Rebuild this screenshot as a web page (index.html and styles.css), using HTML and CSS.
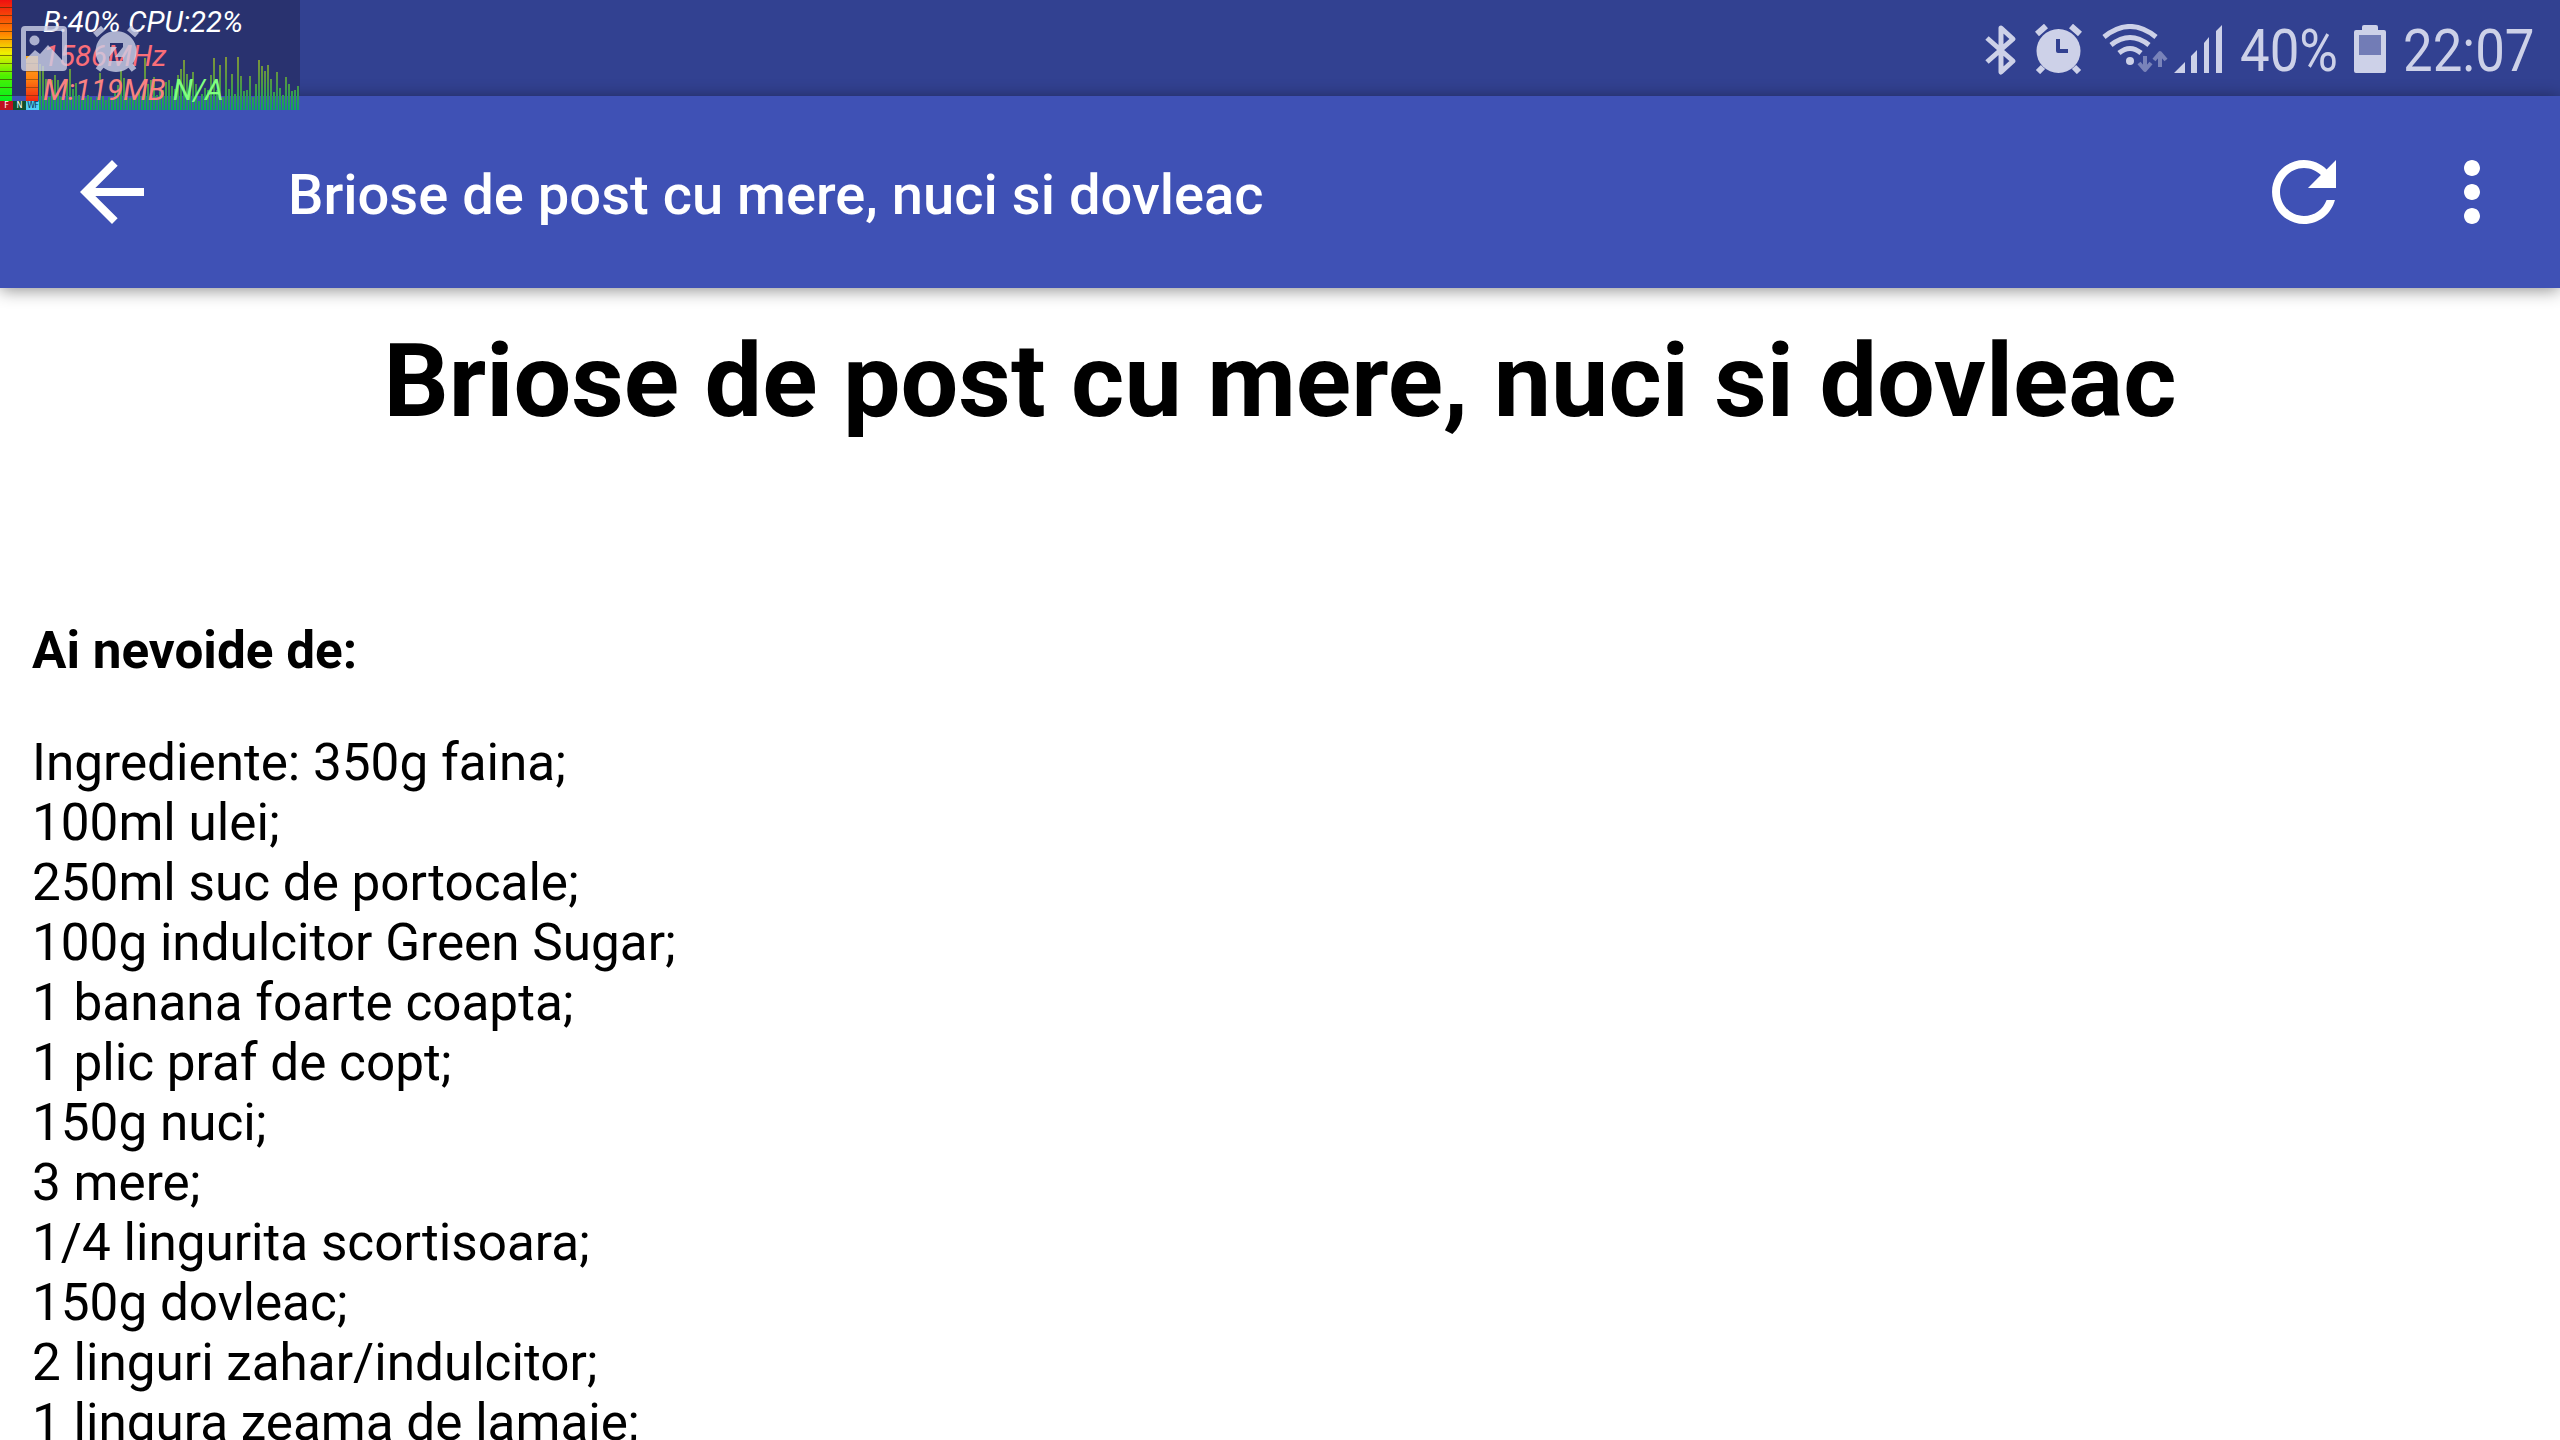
FILE: index.html
```
<!DOCTYPE html>
<html lang="ro">
<head>
    <meta charset="UTF-8">
    <meta name="viewport" content="width=device-width, initial-scale=1.0">
    <title>Briose de post cu mere, nuci si dovleac</title>
    <link rel="stylesheet" href="styles.css">
</head>
<body>

    <div class="status-bar">
        <svg class="notification-icons" width="160" height="96" viewBox="0 0 160 96">
            <path fill-rule="evenodd" d="M25 26h38q4 0 4 4v37q0 4-4 4H25q-4 0-4-4V30q0-4 4-4zm1 5v28l9-9 5 4 8-9 14 15V31z"/>
            <circle cx="34.500" cy="40.500" r="5"/>
            <path fill-rule="evenodd" d="M116 31a20.500 20.500 0 1 0 .1 0zM110 43h13v4l-8 10h8v4h-14v-4l8-10h-7z"/>
            <path class="icon-line" d="M95 35l8-7M137 35l-8-7M102 65l-4 5M130 65l4 5"/>
        </svg>

        <div class="status-icons">
            <svg width="32" height="52" viewBox="0 0 32 52">
                <path class="bt-line" d="M2 14l26 23-12 11V4l12 11L2 38"/>
            </svg>
            <svg width="48" height="50" viewBox="0 0 48 50">
                <circle cx="23.500" cy="27" r="22"/>
                <path class="clock-line" d="M2 10l9-8M45 10l-9-8M8 43l-5 5M39 43l5 5"/>
                <path class="clock-hand" d="M23 15v12h10"/>
            </svg>
            <svg class="wifi" width="66" height="50" viewBox="0 0 66 50">
                <path class="wifi-line" d="M2 13Q28-8 54 13M9 21Q28 6 47 21M17 29Q28 20 39 29"/>
                <circle cx="28" cy="37" r="4"/>
                <path class="wifi-arrow" d="M43 32v12M37 39l6 7 6-7M58 43V31M52 36l6-7 6 7"/>
            </svg>
            <svg width="50" height="50" viewBox="0 0 50 50">
                <path d="M0 49l11-11v11zM17 32l6-6v23h-6zM30 19l5-6v36h-5zM42 7l6-6v48h-6z"/>
            </svg>
        </div>
        <div class="status-text percent"><span>40%</span></div>
        <svg class="battery" width="32" height="48" viewBox="0 0 32 48">
            <path d="M8 5V2q0-2 2-2h12q2 0 2 2v3h6q2 0 2 2v39q0 2-2 2H2q-2 0-2-2V7q0-2 2-2z"/>
            <path class="battery-empty" d="M5 10h22v20H5z"/>
        </svg>
        <div class="status-text clock"><span>22:07</span></div>
    </div>

    <!-- cpu monitor widget floating over the status bar -->
    <div class="monitor">
        <div class="meter-bar"></div>
        <div class="meter-bar-short"></div>
        <svg class="graph" id="graph" width="264" height="60" viewBox="0 0 264 60">
            <defs>
                <linearGradient id="bars" gradientUnits="userSpaceOnUse" x1="0" y1="0" x2="0" y2="60">
                    <stop offset="0" stop-color="#8c9638"/>
                    <stop offset="0.450" stop-color="#5c9642"/>
                    <stop offset="1" stop-color="#10a45c"/>
                </linearGradient>
            </defs>
        </svg>
        <div class="monitor-labels"><span class="f">F</span><span class="n">N</span><span class="w">WF</span></div>
        <div class="monitor-text">
            <div>B:40% CPU:22%</div>
            <div class="mhz">1586MHz</div>
            <div class="mem">M:119MB <span class="na">N/A</span></div>
        </div>
    </div>

    <div class="toolbar">
        <svg class="icon" viewBox="0 0 24 24"><path d="M20 11H7.830l5.590-5.590L12 4l-8 8 8 8 1.410-1.410L7.830 13H20v-2z"/></svg>
        <div class="toolbar-title">Briose de post cu mere, nuci si dovleac</div>
        <svg class="icon refresh" viewBox="0 0 24 24"><path d="M17.650 6.350C16.200 4.900 14.210 4 12 4c-4.420 0-7.990 3.580-7.990 8s3.570 8 7.990 8c3.730 0 6.840-2.550 7.730-6h-2.080c-.82 2.330-3.040 4-5.650 4-3.310 0-6-2.690-6-6s2.690-6 6-6c1.660 0 3.140.69 4.220 1.780L13 11h7V4l-2.350 2.350z"/></svg>
        <svg class="icon more" viewBox="0 0 24 24"><path d="M12 8c1.100 0 2-.9 2-2s-.9-2-2-2-2 .9-2 2 .9 2 2 2zm0 2c-1.100 0-2 .9-2 2s.9 2 2 2 2-.9 2-2-.9-2-2-2zm0 6c-1.100 0-2 .9-2 2s.9 2 2 2 2-.9 2-2-.9-2-2-2z"/></svg>
    </div>

    <div class="content">
        <h1>Briose de post cu mere, nuci si dovleac</h1>
        <p class="need"><strong>Ai nevoide de:</strong></p>
        <p class="ingredients">
            Ingrediente: 350g faina;<br>
            100ml ulei;<br>
            250ml suc de portocale;<br>
            100g indulcitor Green Sugar;<br>
            1 banana foarte coapta;<br>
            1 plic praf de copt;<br>
            150g nuci;<br>
            3 mere;<br>
            1/4 lingurita scortisoara;<br>
            150g dovleac;<br>
            2 linguri zahar/indulcitor;<br>
            1 lingura zeama de lamaie;
        </p>
    </div>

    <script src="graph.js"></script>
</body>
</html>
```
FILE: styles.css
```
body {
    margin: 0;
    height: 1440px;
    overflow: hidden;
    background-color: #fff;
    font-family: Roboto, sans-serif;
    color: #000;
}

.status-bar {
    display: flex;
    height: 96px;
    background-color: #324191;
    fill: #cdd1e8;
    color: #cdd1e8;
}

.status-bar path {
    stroke-linejoin: round;
}

/* drawn above the dark monitor background */
.notification-icons {
    position: relative;
    z-index: 4;
    opacity: 0.8;
}

.icon-line,
.clock-line {
    stroke: #cdd1e8;
    stroke-width: 6;
}

.status-icons {
    display: flex;
    align-items: flex-start;
    margin-left: auto;
    padding-top: 24px;
    gap: 18px;
}

.bt-line {
    fill: none;
    stroke: #cdd1e8;
    stroke-width: 5;
}

.clock-hand {
    fill: none;
    stroke: #324191;
    stroke-width: 4;
}

.wifi {
    margin-left: 1px;
    margin-right: -12px;
}

.wifi-line {
    fill: none;
    stroke: #cdd1e8;
    stroke-width: 5;
}

.wifi-arrow {
    fill: none;
    stroke: #7983b9;
    stroke-width: 4;
}

.status-text {
    font-size: 60px;
    line-height: 70px;
    padding-top: 16px;
    white-space: nowrap;
}

.status-text span {
    display: inline-block;
    transform: scaleX(0.88);
    transform-origin: left;
}

.percent {
    width: 114px;
    margin-left: 16px;
}

.battery {
    margin-top: 25px;
}

.battery-empty {
    fill: #727cb6;
}

.clock {
    width: 157px;
    margin-left: 17px;
}

.monitor {
    position: absolute;
    z-index: 3;
    top: 0;
    left: 0;
    width: 300px;
    height: 110px;
    background: linear-gradient(#29326f 96px, transparent 96px);
}

.meter-bar {
    position: absolute;
    left: 0;
    top: 0;
    width: 12px;
    height: 102px;
    background: repeating-linear-gradient(transparent 0 7px, rgba(60, 40, 0, 0.6) 7px 8px),
        linear-gradient(#f01010, #ff8000 32%, #f0f000 52%, #50f000 74%, #00f020);
}

.meter-bar-short {
    position: absolute;
    left: 26px;
    top: 56px;
    width: 12px;
    height: 46px;
    background: repeating-linear-gradient(transparent 0 7px, rgba(60, 40, 0, 0.4) 7px 8px),
        linear-gradient(#ffb020, #ff8010 50%, #f02010);
}

.graph {
    position: absolute;
    left: 39px;
    top: 50px;
    fill: url(#bars);
}

.monitor-labels {
    position: absolute;
    left: 0;
    top: 101px;
    display: flex;
    font: 8px/9px "DejaVu Sans", sans-serif;
    text-align: center;
    color: #fff;
}

.monitor-labels span {
    width: 13px;
    height: 9px;
}

.monitor-labels .f {
    background-color: #c01020;
}

.monitor-labels .n {
    background-color: #105030;
}

.monitor-labels .w {
    background-color: #50d0f8;
    color: #103050;
    letter-spacing: -1px;
}

.monitor-text {
    position: absolute;
    left: 43px;
    top: 5px;
    font-size: 29.4px;
    font-style: italic;
    line-height: 34px;
    white-space: nowrap;
    color: #fff;
}

.monitor-text .mhz {
    color: #fa6e78;
}

.monitor-text .mem {
    color: #fa8282;
}

.monitor-text .na {
    color: #80ff80;
}

.toolbar {
    position: relative;
    display: flex;
    align-items: center;
    height: 192px;
    padding: 0 40px 0 64px;
    background-color: #3f51b5;
    box-shadow: 0 2px 16px rgba(0, 0, 0, 0.45);
    color: #fff;
}

.icon {
    width: 96px;
    height: 96px;
    fill: #fff;
}

.toolbar-title {
    flex: 1;
    margin-left: 128px;
    padding-top: 6px;
    font-size: 56.1px;
    font-weight: 500;
}

.refresh {
    margin-right: 72px;
}

.content {
    padding: 33px 32px;
    font-size: 51.25px;
    line-height: 60px;
}

h1 {
    margin: 0;
    font-size: 102.4px;
    line-height: 120px;
    text-align: center;
}

.need {
    margin: 180px 0 52px;
}

.ingredients {
    margin: 0;
}
```
FILE: graph.js
```
// bar heights of the cpu history, oldest first
var heights = [
    46, 44, 31, 13, 30, 35, 30, 13, 10, 30,
    41, 21, 27, 15, 10, 12, 15, 13, 10, 13,
    37, 14, 10, 13, 10, 18, 25, 40, 32, 13,
    12, 14, 15, 21, 14, 52, 26, 30, 33, 15,
    20, 20, 28, 30, 24, 21, 35, 41, 50, 36,
    30, 38, 26, 9, 16, 22, 20, 35, 52, 20,
    45, 13, 53, 21, 36, 16, 53, 34, 19, 20,
    34, 13, 26, 50, 44, 39, 45, 31, 18, 38,
    22, 15, 33, 26, 19, 20, 24
];
var graph = document.getElementById('graph');

heights.forEach(function (h, i) {
    var bar = document.createElementNS('http://www.w3.org/2000/svg', 'rect');
    bar.setAttribute('x', i * 3);
    bar.setAttribute('y', 60 - h);
    bar.setAttribute('width', 2);
    bar.setAttribute('height', h);
    graph.appendChild(bar);
});
```
